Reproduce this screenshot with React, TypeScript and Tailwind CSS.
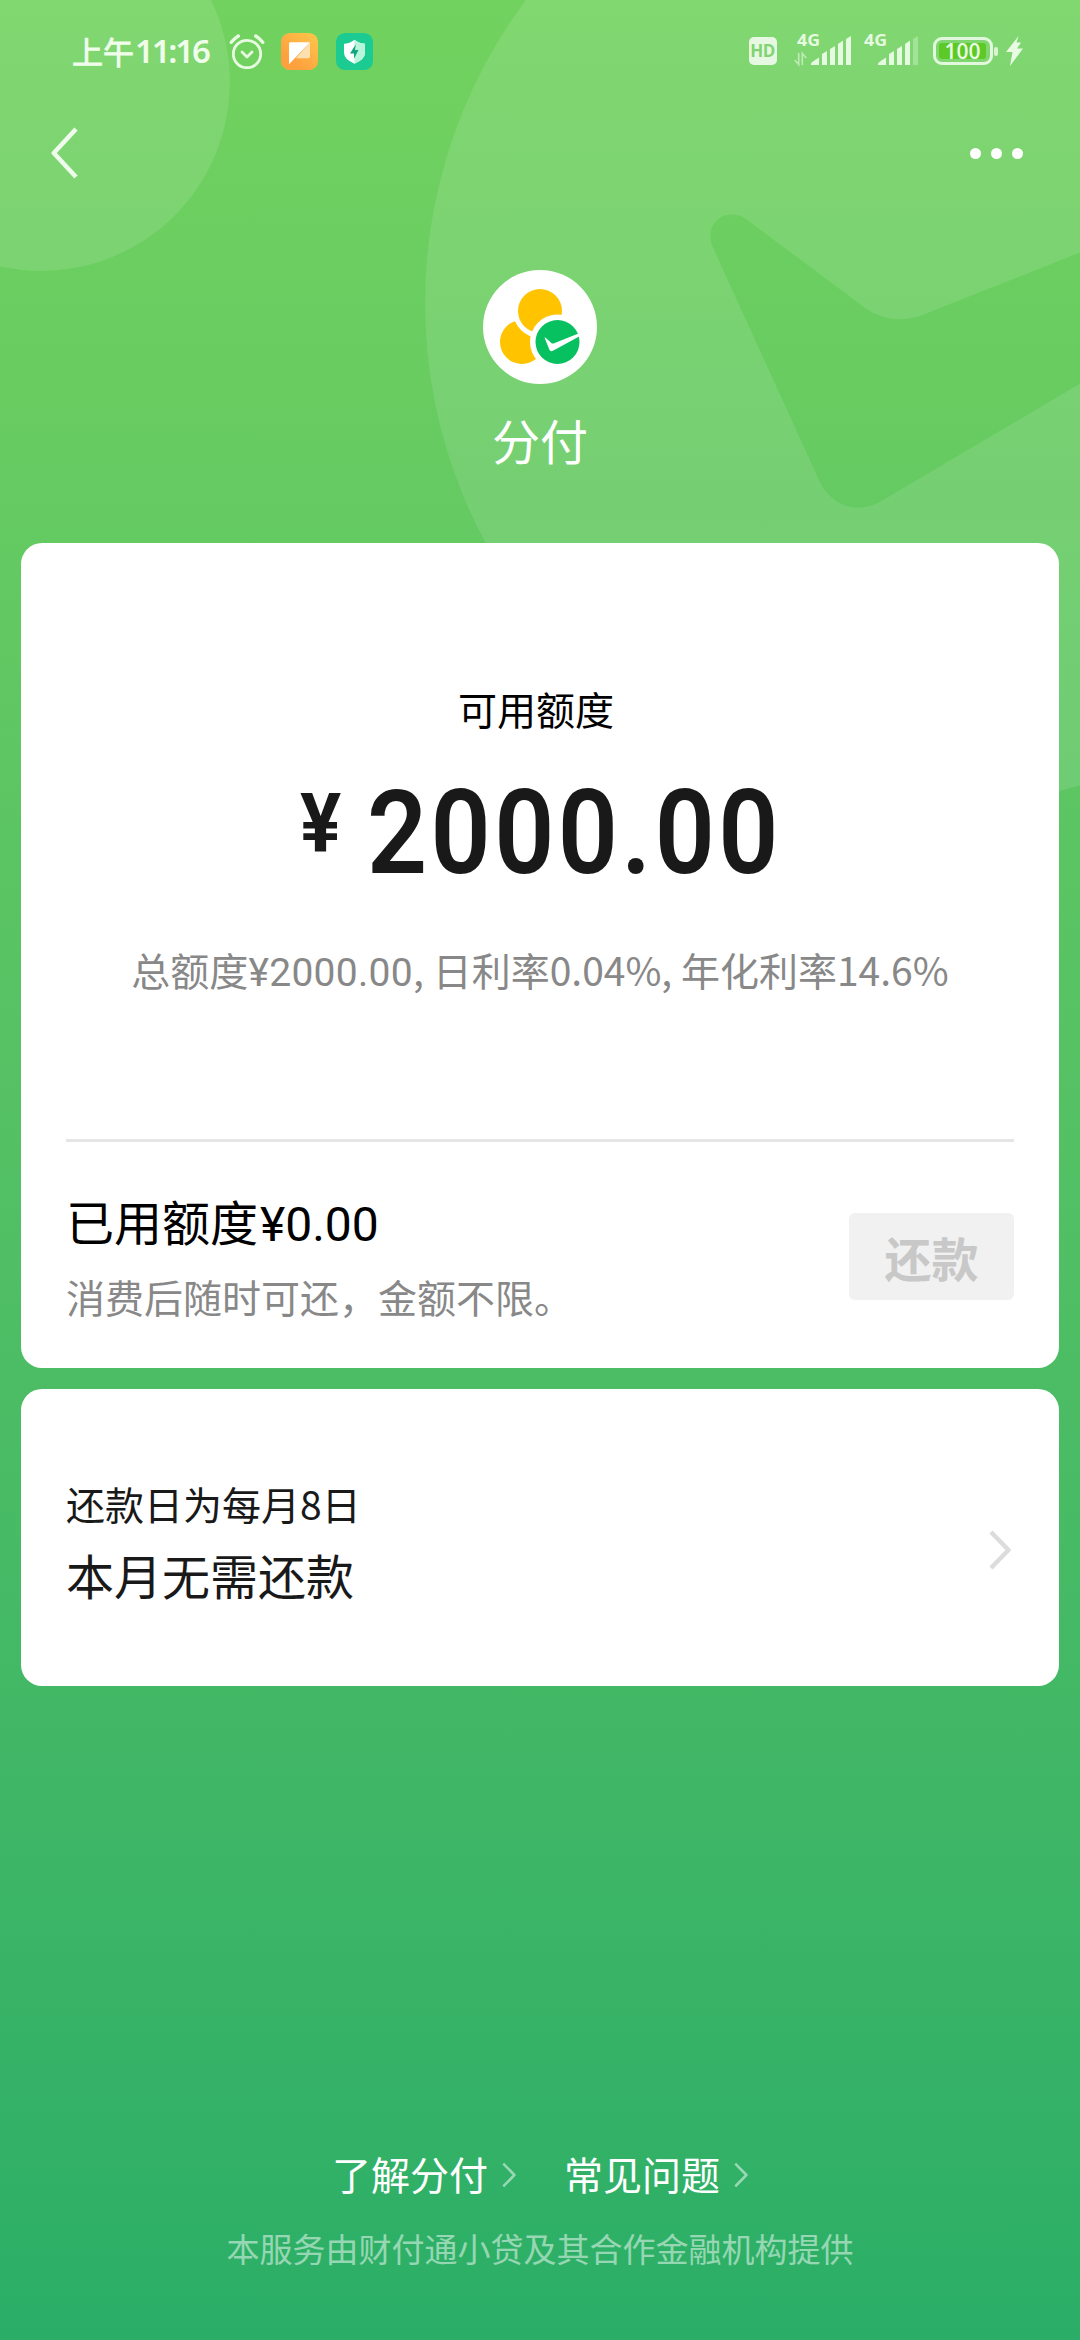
import type { ReactNode } from "react";

const CJK = "font-['Noto_Sans_CJK_SC',sans-serif]";

function Backdrop() {
  return (
    <svg className="absolute inset-0 h-full w-full" viewBox="0 0 1080 2340" fill="none">
      <circle cx="41" cy="82.2" r="188.8" fill="#fff" fillOpacity="0.11" />
      <path
        fillRule="evenodd"
        clipRule="evenodd"
        fill="#fff"
        fillOpacity="0.11"
        d="M425 303a505 505 0 1 0 1010 0a505 505 0 1 0 -1010 0Z
           M746 219L866 308.7Q896 328 930 312L1180 213V324.5L879 502.6C856 514 832 506 819.8 482L713 247.5C702 222 728 206 746 219Z"
      />
    </svg>
  );
}

function AlarmIcon() {
  return (
    <svg className="h-9 w-9" viewBox="0 0 36 36" fill="none" stroke="#e8fbe2" strokeLinecap="round">
      <circle cx="18" cy="21" r="13.7" strokeWidth="2.8" />
      <path d="M13 19l5 5 5-5" strokeWidth="2.8" strokeLinejoin="round" />
      <path d="M2.3 9.3q3-4 7-6.3M33.7 9.3q-3-4-7-6.3" strokeWidth="3.4" />
    </svg>
  );
}

function NoteIcon() {
  return (
    <svg className="h-[37px] w-[37px]" viewBox="0 0 37 38" preserveAspectRatio="none">
      <defs>
        <linearGradient id="note" x1="1" y1="0" x2="0.3" y2="0.8">
          <stop offset="0" stopColor="#fdc84b" />
          <stop offset="1" stopColor="#fda03e" />
        </linearGradient>
      </defs>
      <rect width="37" height="38" rx="9" fill="url(#note)" />
      <path d="M29 9.500V24q0 2-2 2H15Z" fill="#fde0b0" />
      <path d="M8 11q0-1.500 1.500-1.500H29L8 32Z" fill="#fff" />
    </svg>
  );
}

function ShieldIcon() {
  return (
    <svg className="h-[37px] w-[37px]" viewBox="0 0 37 38" preserveAspectRatio="none">
      <rect width="37" height="38" rx="9" fill="#1bcb91" />
      <path d="M18.500 7q5 4 10.500 4v9q0 7-10.500 11.500Q8 27 8 20v-9q5.500 0 10.500-4Z" fill="#fff" />
      <path d="M18.500 7q5 4 10.500 4v9q0 7-10.500 11.500Z" fill="#b9f5dc" />
      <path d="M19.800 11.500L14 21h4v5.500L22.500 17.500h-3.500Z" fill="#12a67e" />
    </svg>
  );
}

function Signal({ weak, arrows }: { weak?: boolean; arrows?: boolean }) {
  return (
    <svg className="mb-[2px] h-[40px] w-[57px] overflow-visible" viewBox="0 -8 57 40" fill="#e6f9e1">
      <text x="3" y="12" fontSize="15.500" fontWeight="700" textLength="23" lengthAdjust="spacingAndGlyphs" fontFamily="Open Sans, sans-serif">
        4G
      </text>
      {arrows && (
        <g fill="none" stroke="#e6f9e1" strokeOpacity="0.6" strokeWidth="1.700">
          <path d="M4.700 19v11.500l-4-4.500M8.300 31V19.500l4 4.500" />
        </g>
      )}
      <path d="M17 29.500q0-1 8-6V31h-8Z" />
      <path d="M28 20l5-3V31h-5Z" />
      <path d="M36 15l5-3V31h-5Z" />
      <path d="M44 10l5-3.500V31h-5Z" />
      <path d="M52 5l5-3V31h-5Z" opacity={weak ? 0.35 : 1} />
    </svg>
  );
}

function Battery() {
  return (
    <div className="flex items-center">
      <div className="flex h-7 w-[60px] items-center rounded-[9px] border-[3.5px] border-[#e2f8dc] p-[3.5px]">
        <div className="flex h-[16px] w-full items-center justify-center rounded-[3px] bg-[#5cc926]">
          <span className="font-['Open_Sans',sans-serif] text-[21px] leading-[28px] font-semibold text-[#e9fbe3]">100</span>
        </div>
      </div>
      <div className="ml-[1.5px] h-[9px] w-[4px] rounded-[2px] bg-[#d8f5d0]" />
      <svg className="ml-[8px] h-[30px] w-[17px]" viewBox="0 0 17 30" fill="#e9fbe3">
        <path d="M12.500 0L0 16h6.500L4 30 17 12.500h-6l4-6h-4.500Z" />
      </svg>
    </div>
  );
}

function StatusBar() {
  return (
    <div className="flex h-[102px] items-center pr-[57px] pl-[72px]">
      <span className={`${CJK} flex w-[140px] items-center text-[31px] leading-[40px] whitespace-nowrap text-[#effdea] [-webkit-text-stroke:0.9px_#effdea]`}>
        上午
        <span className="ml-[1px] font-['Noto_Sans',sans-serif] text-[33px] font-semibold tracking-[-2.2px] [-webkit-text-stroke:0]">11:16</span>
      </span>
      <div className="ml-[17px] flex items-center">
        <AlarmIcon />
        <div className="ml-[16px]"><NoteIcon /></div>
        <div className="ml-[18px]"><ShieldIcon /></div>
      </div>
      <div className="ml-auto flex items-center">
        <div className="flex h-7 w-7 items-center justify-center rounded-[5px] bg-[#e6f8e2] font-['Open_Sans',sans-serif] text-[17px] leading-[28px] font-bold tracking-[-0.5px] text-[#80d471]">
          HD
        </div>
        <div className="ml-[17px] mb-[8px]"><Signal arrows /></div>
        <div className="ml-[10px] mb-[8px]"><Signal weak /></div>
        <div className="ml-[15px]"><Battery /></div>
      </div>
    </div>
  );
}

function NavBar() {
  return (
    <div className="flex h-[102px] items-center justify-between pr-[57px] pl-[51px]">
      <svg className="h-[52px] w-[28px]" viewBox="0 0 28 52" fill="none" stroke="#effceb" strokeWidth="4.500">
        <path d="M25 2L2.800 26 25 50" strokeLinejoin="round" />
      </svg>
      <div className="flex gap-[10px]">
        <span className="h-[11px] w-[11px] rounded-full bg-white" />
        <span className="h-[11px] w-[11px] rounded-full bg-white" />
        <span className="h-[11px] w-[11px] rounded-full bg-white" />
      </div>
    </div>
  );
}

function Logo() {
  return (
    <svg className="h-[114px] w-[114px]" viewBox="0 0 114 114">
      <circle cx="57" cy="57" r="57" fill="#fff" />
      <circle cx="39" cy="72" r="22" fill="#ffc300" />
      <circle cx="57" cy="41" r="27" fill="#fff" />
      <circle cx="57" cy="41" r="22" fill="#ffc300" />
      <circle cx="74.500" cy="72" r="27.500" fill="#fff" />
      <circle cx="74.500" cy="72" r="22" fill="#07c160" />
      <path d="M61.500 67.500q1-.6 7 5.700.8.600 2 .2L98 62.500 97 66 70 80.800q-2.500 1.200-3.600-1Z" fill="#fff" />
    </svg>
  );
}

function Chevron({ className, width }: { className: string; width: number }) {
  return (
    <svg className={className} viewBox="0 0 22 40" fill="none" stroke="currentColor" strokeWidth={width}>
      <path d="M2 2l17.500 18L2 38" strokeLinejoin="round" />
    </svg>
  );
}

function FooterLink({ children }: { children: ReactNode }) {
  return (
    <a className="flex items-center text-[39px] leading-[56px] text-white">
      {children}
      <Chevron className="mt-[4px] ml-[14px] h-[26px] w-[14px] text-white/50" width={4} />
    </a>
  );
}

export default function App() {
  return (
    <main className={`${CJK} relative h-[2340px] w-[1080px] overflow-hidden bg-linear-to-b from-[#72d25f] to-[#2aae67]`}>
      <Backdrop />
      <div className="relative flex h-full flex-col">
        <StatusBar />
        <NavBar />
        <header className="mt-[66px] flex flex-col items-center">
          <Logo />
          <h1 className="mt-[20px] text-[48px] leading-[70px] text-white">分付</h1>
        </header>

        <section className="mx-[21px] mt-[69px] flex h-[825px] flex-col rounded-[21px] bg-white px-[45px]">
          <div className="flex h-[596px] flex-col items-center pt-[137px]">
            <p className="mr-[8px] text-[39px] leading-[56px] text-black">可用额度</p>
            <div className="mt-[37px] flex h-[120px] items-start self-start pl-[234px] font-['Roboto',sans-serif] text-[#191919]">
              <span className="w-[67px] text-[81px] leading-[102px] font-bold">
                <span className="inline-block origin-left scale-x-95">¥</span>
              </span>
              <span className="inline-block origin-left scale-x-90 text-[117px] leading-[121px] font-semibold tracking-[3.8px]">2000.00</span>
            </div>
            <p className="mt-[48px] text-[39px] leading-[56px] whitespace-nowrap text-[#888]">
              总额度<span className="font-['Roboto',sans-serif] tracking-[0.3px]">¥2000.00</span>, 日利率0.04%, 年化利率14.6%
            </p>
          </div>
          <div className="h-[3px] bg-[#e5e5e5]" />
          <div className="flex items-start justify-between">
            <div className="pt-[43px]">
              <p className="text-[48px] leading-[70px] text-black">
                已用额度<span className="ml-[2px] font-['Roboto',sans-serif]">¥0.00</span>
              </p>
              <p className="mt-[8px] text-[39px] leading-[56px] text-[#888]">消费后随时可还，金额不限。</p>
            </div>
            <button className="mt-[71px] flex h-[87px] w-[165px] items-center justify-center rounded-[6px] bg-[#f1f1f1] text-[47px] leading-[85px] font-bold text-[#c8c8c8]">
              还款
            </button>
          </div>
        </section>

        <section className="mx-[21px] mt-[21px] flex h-[297px] items-center justify-between rounded-[21px] bg-white pr-[48px] pl-[45px] text-[#191919]">
          <div className="pt-[9px]">
            <p className="text-[39px] leading-[56px]">还款日为每月8日</p>
            <p className="mt-[8px] text-[48px] leading-[70px]">本月无需还款</p>
          </div>
          <Chevron className="mt-[24px] h-[40px] w-[22px] text-[#dcdcdc]" width={4.5} />
        </section>

        <footer className="mt-auto flex flex-col items-center pb-[68px]">
          <div className="flex gap-[48px]">
            <FooterLink>了解分付</FooterLink>
            <FooterLink>常见问题</FooterLink>
          </div>
          <p className="mt-[23px] text-[33px] leading-[48px] text-white/50">本服务由财付通小贷及其合作金融机构提供</p>
        </footer>
      </div>
    </main>
  );
}
